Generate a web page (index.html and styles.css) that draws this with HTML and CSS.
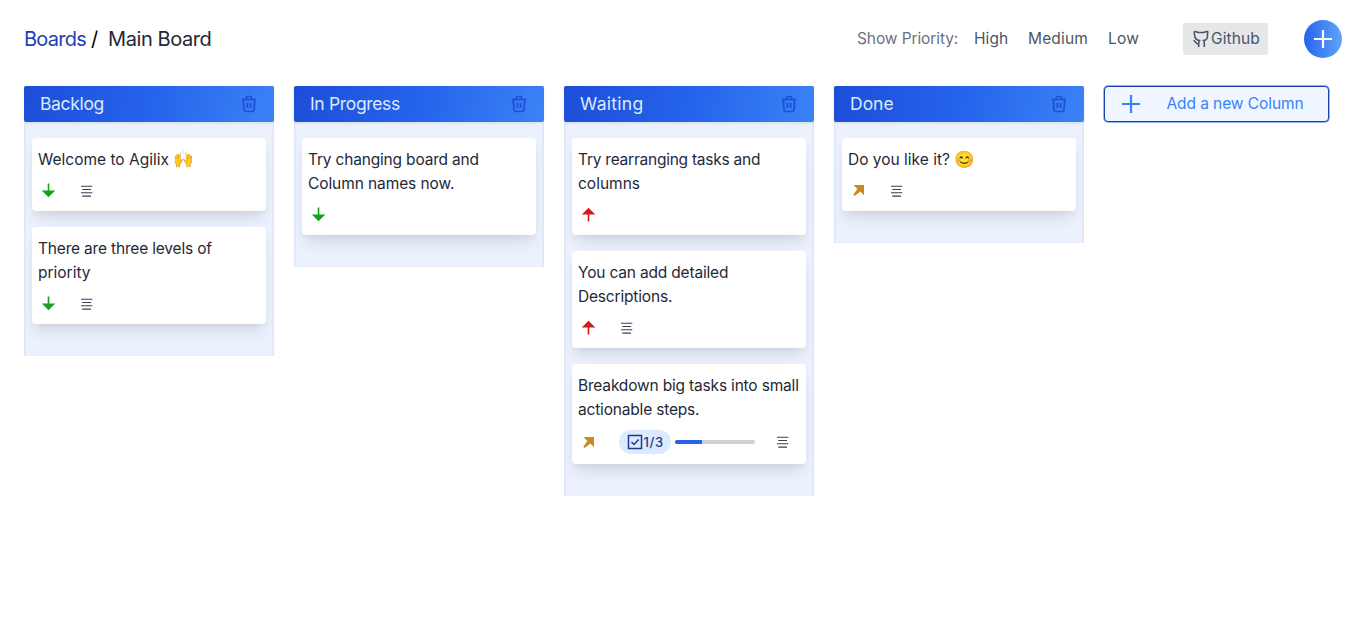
FILE: index.html
```
<!DOCTYPE html>
<html lang="en">
<head>
<meta charset="utf-8">
<title>Main Board</title>
<link rel="stylesheet" href="styles.css">
</head>
<body>
<svg class="defs" width="0" height="0">
  <symbol id="trash" viewBox="0 0 16 18"><path d="M1 4.5h14M5.3 4.2V3Q5.3 1.5 6.8 1.5h2.4q1.5 0 1.5 1.5v1.2M2.3 4.8l.7 10q.1 1.7 1.8 1.7h6.4q1.7 0 1.8-1.7l.7-10M6.4 8v5M9.6 8v5" fill="none" stroke="currentColor" stroke-width="1.7"/></symbol>
  <symbol id="down" viewBox="0 0 14 15"><path d="M5.7 .5h1.6v7h6L6.5 14.3-.2 7.5h5.9z" fill="currentColor"/></symbol>
  <symbol id="up" viewBox="0 0 14 15"><path d="M5.7 14.5h1.6v-7h6L6.5 .7-.2 7.5h5.9z" fill="currentColor"/></symbol>
  <symbol id="diag" viewBox="0 0 14 15"><path d="M1.5 2H12v10.2L8.4 8.6 2.6 12.9 1.3 11.8 5.4 6z" fill="currentColor"/></symbol>
  <symbol id="lines" viewBox="0 0 12 12"><path d="M0 1.2h11.3M1.3 4.5h8.7M0 7.8h11.3M1.3 11.1h8.7" stroke="currentColor" stroke-width="1.1"/></symbol>
  <symbol id="plus" viewBox="0 0 20 20"><path d="M10 1v18M1 10h18" stroke="currentColor" stroke-width="2.2"/></symbol>
</svg>
<header class="topbar">
  <h1 class="crumbs"><a class="boards">Boards</a><span class="slash">/</span><span class="board-name">Main Board</span></h1>
  <nav class="filters">
    <span class="label">Show Priority:</span><span class="high">High</span><span class="medium">Medium</span><span class="low">Low</span>
  </nav>
  <a class="github"><svg width="16" height="18" viewBox="0 0 16 18"><path d="M1.4 1.5Q3 1.3 5 2.5h6Q13 1.3 14.6 1.5q.5 2-.2 3.2 1.1 4.8-3.9 5.9.8 1 .8 2.2V17M5.7 17v-4.2q0-1.2.8-2.2-5-1.1-4.9-5.9-.7-1.2-.2-3.2M.5 10.6c2.3 0 1.8 3.6 5.2 3.5" fill="none" stroke="currentColor" stroke-width="1.6"/></svg><span>Github</span></a>
  <button class="add"><svg width="20" height="20"><use href="#plus"/></svg></button>
</header>
<main class="board">
  <section class="column">
    <h2 class="head"><span class="tight">Backlog</span><svg><use href="#trash"/></svg></h2>
    <div class="body">
      <article class="card"><p class="wide">Welcome to Agilix <span class="emoji">🙌</span></p><div class="meta"><svg class="pri green"><use href="#down"/></svg><svg class="desc"><use href="#lines"/></svg></div></article>
      <article class="card"><p>There are three levels of<br><span class="wide">priority</span></p><div class="meta"><svg class="pri green"><use href="#down"/></svg><svg class="desc"><use href="#lines"/></svg></div></article>
    </div>
  </section>
  <section class="column">
    <h2 class="head"><span class="tight">In Progress</span><svg><use href="#trash"/></svg></h2>
    <div class="body">
      <article class="card"><p>Try changing board and<br><span class="medium-wide">Column names now.</span></p><div class="meta"><svg class="pri green"><use href="#down"/></svg></div></article>
    </div>
  </section>
  <section class="column">
    <h2 class="head"><span class="loose">Waiting</span><svg><use href="#trash"/></svg></h2>
    <div class="body">
      <article class="card"><p class="dense">Try rearranging tasks and<br><span class="wide">columns</span></p><div class="meta"><svg class="pri red"><use href="#up"/></svg></div></article>
      <article class="card"><p>You can add detailed<br>Descriptions.</p><div class="meta"><svg class="pri red"><use href="#up"/></svg><svg class="desc"><use href="#lines"/></svg></div></article>
      <article class="card"><p>Breakdown big tasks into small<br>actionable steps.</p><div class="meta tall"><svg class="pri amber"><use href="#diag"/></svg><span class="badge"><svg width="16" height="16" viewBox="0 0 16 16"><path d="M1.5 1.5h13v13h-13zM4.5 8l2.5 2.5 4.7-5" fill="none" stroke="currentColor" stroke-width="1.5"/></svg><span>1/3</span></span><span class="track"><span class="fill" style="width:33.3%"></span></span><svg class="desc"><use href="#lines"/></svg></div></article>
    </div>
  </section>
  <section class="column">
    <h2 class="head"><span>Done</span><svg><use href="#trash"/></svg></h2>
    <div class="body">
      <article class="card"><p class="wide">Do you like it? <span class="emoji">😊</span></p><div class="meta"><svg class="pri amber"><use href="#diag"/></svg><svg class="desc"><use href="#lines"/></svg></div></article>
    </div>
  </section>
  <button class="new-column"><svg width="20" height="20"><use href="#plus"/></svg><span>Add a new Column</span></button>
</main>
</body>
</html>
```
FILE: styles.css
```
* { box-sizing: border-box; }
body { margin: 0; background: #fff; color: #1f2937; font: 15.5px/24px Inter, "Noto Sans", sans-serif; }
h1, h2, p { margin: 0; font-weight: 400; }
button { font: inherit; border: 0; padding: 0; }
svg { display: block; flex: none; overflow: visible; }
symbol { overflow: visible; }
.defs { position: absolute; }
.topbar { display: flex; align-items: center; height: 78px; padding: 0 24px; color: #4b5563; }
.crumbs { display: flex; font-size: 20px; line-height: 28px; margin-right: auto; }
.boards { color: #1e40af; width: 67px; letter-spacing: -.75px; }
.slash { color: #000; width: 17px; }
.board-name { color: #1f2937; letter-spacing: -.42px; }
.filters { display: flex; }
.label { color: #6b7280; width: 117px; letter-spacing: -.1px; }
.high { width: 54px; letter-spacing: .1px; }
.medium { width: 80px; letter-spacing: .15px; }
.low { width: 75px; letter-spacing: .2px; }
.github { display: flex; align-items: center; width: 85px; height: 32px; padding-left: 10px; gap: 2px; background: #e5e7eb; border-radius: 2px; letter-spacing: .1px; }
.add { display: grid; place-items: center; width: 38px; height: 38px; margin-left: 36px; border-radius: 50%; background: linear-gradient(to right, #2563eb, #60a5fa); color: #fff; }
.board { display: flex; align-items: flex-start; gap: 20px; padding: 8px 24px 0; }
.column { width: 250px; background: #ebf2fe; box-shadow: inset 2px 0 2px -1px rgba(30, 64, 175, .09), inset -2px 0 2px -1px rgba(30, 64, 175, .09); }
.head { display: flex; align-items: center; justify-content: space-between; height: 36px; padding: 0 17.5px 0 16px; border-radius: 2px; background: linear-gradient(100deg, #1d4ed8, #2563eb 50%, #3b82f6); color: #dbeafe; font-size: 17.5px; box-shadow: 0 1px 3px rgba(0, 0, 0, .1); }
.head svg { width: 16px; height: 18px; color: #1d4ed8; }
.tight { letter-spacing: -.34px; }
.loose { letter-spacing: .28px; }
.body { display: flex; flex-direction: column; gap: 16px; padding: 16px 8px 32px; }
.card { padding: 10px 6px 2px; border-radius: 4px; background: #fff; box-shadow: 0 10px 15px -3px rgba(0, 0, 0, .1), 0 4px 6px -2px rgba(0, 0, 0, .05); white-space: nowrap; letter-spacing: -.18px; }
.card p { height: auto; }
.dense { letter-spacing: -.24px; }
.medium-wide { letter-spacing: -.09px; }
.wide { letter-spacing: 0; }
.emoji { font-size: 16.5px; line-height: 1; }
.meta { display: flex; align-items: center; height: 37px; padding-left: 4px; }
.tall { height: 40px; }
.pri { width: 14px; height: 15px; }
.desc { width: 12px; height: 12px; margin-left: 25px; color: #374151; }
.green { color: #16a01f; }
.red { color: #cf1c1c; }
.amber { color: #ca8a1b; }
.badge { display: flex; align-items: center; gap: 1px; width: 52px; height: 24px; margin-left: 23px; padding-left: 7.5px; border-radius: 12px; background: #dbeafe; color: #1e3a8a; font-size: 13px; font-weight: 500; letter-spacing: .6px; }
.track { width: 80px; height: 4px; margin-left: 4px; border-radius: 2px; background: #d1d1d1; overflow: hidden; }
.fill { display: block; height: 4px; background: #2563eb; }
.tall .desc { margin-left: 22px; }
.new-column { display: flex; align-items: center; width: 225px; height: 36px; padding-left: 16px; gap: 25.5px; border: 1px solid #1e40af; border-radius: 4px; background: #eff6ff; color: #3b82f6; box-shadow: 0 0 0 .7px #6f9af0; letter-spacing: -.08px; }
```
